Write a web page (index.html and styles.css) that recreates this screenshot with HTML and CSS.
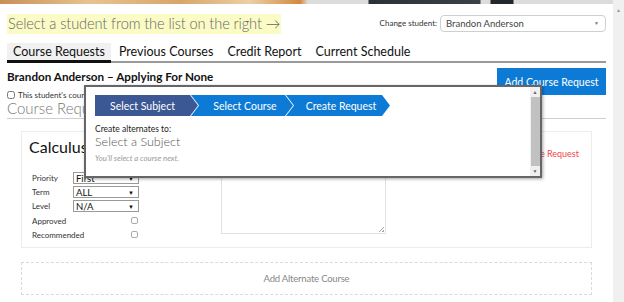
FILE: index.html
```html
<!DOCTYPE html>
<html lang="en">
<head>
    <meta charset="UTF-8">
    <title>Course Requests</title>
    <link rel="stylesheet" href="styles.css">
</head>
<body>
    <div class="page">
        <div class="main">
            <div class="banner"></div>

            <div class="content">
                <div class="student-bar">
                    <h1 class="pick">Select a student from the list on the right &rarr;</h1>
                    <div class="change">
                        <span class="change-label">Change student:</span>
                        <div class="student-select">
                            <span>Brandon Anderson</span>
                            <span class="caret">&#9660;</span>
                        </div>
                    </div>
                </div>

                <ul class="tabs">
                    <li class="tab active">Course Requests</li>
                    <li class="tab">Previous Courses</li>
                    <li class="tab">Credit Report</li>
                    <li class="tab">Current Schedule</li>
                </ul>

                <div class="student-head">
                    <div>
                        <h2 class="student-name">Brandon Anderson &ndash; Applying For None</h2>
                        <label class="lock"><input type="checkbox"> This student's course requests are locked</label>
                    </div>
                    <button class="add-btn">Add Course Request</button>
                </div>

                <h3 class="section-title">Course Requests</h3>

                <div class="card">
                    <div class="card-left">
                        <h4 class="course-name">Calculus I</h4>
                        <div class="fields">
                            <span class="lbl">Priority</span>
                            <div class="mini-select"><span>First</span><span class="arrow">&#9660;</span></div>
                            <span class="lbl">Term</span>
                            <div class="mini-select"><span>ALL</span><span class="arrow">&#9660;</span></div>
                            <span class="lbl">Level</span>
                            <div class="mini-select"><span>N/A</span><span class="arrow">&#9660;</span></div>
                            <span class="lbl">Approved</span>
                            <span class="box"></span>
                            <span class="lbl">Recommended</span>
                            <span class="box"></span>
                        </div>
                    </div>
                    <div class="notes"><span class="grip"></span></div>
                    <a class="remove" href="#">Remove Request</a>
                </div>

                <div class="alternate">Add Alternate Course</div>
            </div>

            <div class="modal">
                <div class="modal-body">
                    <div class="steps">
                        <div class="step done">Select Subject</div>
                        <div class="step">Select Course</div>
                        <div class="step">Create Request</div>
                    </div>
                    <p class="alt-label">Create alternates to:</p>
                    <p class="alt-title">Select a Subject</p>
                    <p class="alt-hint">You'll select a course next.</p>
                </div>
                <div class="modal-scroll">
                    <span class="sc-arrow">&#9650;</span>
                    <span class="sc-thumb"></span>
                    <span class="sc-arrow">&#9660;</span>
                </div>
            </div>
        </div>

        <div class="page-scroll">
            <span class="sc-arrow">&#9650;</span>
        </div>
    </div>
</body>
</html>
```

FILE: styles.css
```css
:root {
    --blue: #0d7bd6;
    --dark-blue: #3b5894;
    --text: #222;
}

* {
    margin: 0;
    padding: 0;
    box-sizing: border-box;
    font-family: Lato, 'Open Sans', sans-serif;
}

body {
    background: #fff;
    color: var(--text);
    width: 624px;
    height: 302px;
    overflow: hidden;
}

.page {
    display: flex;
    height: 302px;
}

.main {
    position: relative;
    width: 613px;
}

.banner {
    height: 4px;
    background: linear-gradient(90deg, #c98f56 0, #e6c391 90px, #d8a569 180px, #eccfa6 250px, #d2883f 300px, #dcdcdc 308px, #dcdcdc 368px, #2b3137 369px, #3a4248 480px, #dcdcdc 481px, #dcdcdc 490px, #22282c 491px, #22282c 513px, #dcdcdc 514px);
}

.content {
    padding: 0 7px;
}

/* student picker */
.student-bar {
    display: flex;
    justify-content: space-between;
    align-items: center;
    margin-top: 8px;
}

.pick {
    background: #fbfbc6;
    color: #666;
    font-size: 14.6px;
    font-weight: 300;
    letter-spacing: -0.1px;
    line-height: 20px;
    padding: 0 1px;
    margin-top: 2px;
}

.change {
    display: flex;
    align-items: center;
    gap: 3px;
}

.change-label {
    font-size: 8px;
    color: #333;
}

.student-select {
    width: 166px;
    height: 17px;
    border: 1px solid #cfcfcf;
    border-radius: 4px;
    display: flex;
    justify-content: space-between;
    align-items: center;
    padding: 0 6px 0 5px;
    font-size: 9.5px;
    color: #444;
}

.caret {
    font-size: 5px;
    color: #777;
}

/* tabs */
.tabs {
    display: flex;
    gap: 2px;
    list-style: none;
    margin-top: 9px;
    border-bottom: 2px solid #9a9a9a;
}

.tab {
    font-size: 12.5px;
    line-height: 18px;
    padding: 0 6px;
    color: #111;
}

.tab.active {
    background: #f1f1f1;
    box-shadow: inset 0 -3px 0 #111;
    margin-bottom: -2px;
    padding-bottom: 2px;
}

/* student header */
.student-head {
    display: flex;
    justify-content: space-between;
    align-items: flex-start;
    height: 31px;
    margin-top: 5px;
}

.student-name {
    font-size: 11.7px;
    font-weight: 700;
    line-height: 15px;
    margin-top: 1px;
    color: #111;
}

.lock {
    display: flex;
    align-items: center;
    gap: 3px;
    font-size: 8px;
    color: #333;
    line-height: 10px;
    margin-top: 6px;
    white-space: nowrap;
}

.lock input {
    width: 8px;
    height: 8px;
    margin: 0;
}

.add-btn {
    width: 109px;
    height: 27px;
    border: none;
    background: var(--blue);
    color: #fff;
    font-size: 10.5px;
}

.section-title {
    font-size: 15px;
    font-weight: 300;
    color: #777;
    line-height: 18px;
    padding-bottom: 1px;
    border-bottom: 1px solid #cfcfcf;
}

/* course card */
.card {
    display: flex;
    align-items: flex-start;
    margin: 12px 14px 0;
    height: 117px;
    border: 1px solid #ececec;
    padding: 5px 12px 0 7px;
}

.card-left {
    width: 192px;
}

.course-name {
    font-size: 16px;
    font-weight: 400;
    color: #111;
    line-height: 20px;
}

.fields {
    display: grid;
    grid-template-columns: 41px 66px;
    grid-auto-rows: 14.2px;
    align-items: center;
    margin: 14px 0 0 3px;
}

.lbl {
    font-size: 8px;
    color: #333;
}

.mini-select {
    height: 12px;
    border: 1px solid #999;
    display: flex;
    justify-content: space-between;
    align-items: center;
    padding: 0 4px 0 2px;
    font-size: 9.5px;
    color: #111;
}

.mini-select .arrow {
    font-size: 6px;
}

.box {
    justify-self: end;
    width: 7px;
    height: 7px;
    border: 1px solid #aaa;
    border-radius: 2px;
    margin-right: 1px;
}

.notes {
    position: relative;
    width: 165px;
    height: 97px;
    border: 1px solid #e2e2e2;
}

.grip {
    position: absolute;
    right: 1px;
    bottom: 1px;
    width: 5px;
    height: 5px;
    background: linear-gradient(135deg, transparent 45%, #aaa 45%, #aaa 55%, transparent 55%, transparent 75%, #aaa 75%);
}

.remove {
    margin-left: auto;
    margin-top: 11px;
    color: #f04848;
    font-size: 9px;
    text-decoration: none;
}

.alternate {
    margin: 14px 14px 0;
    height: 33px;
    border: 1px dashed #dadada;
    display: flex;
    align-items: center;
    justify-content: center;
    font-size: 9.5px;
    color: #888;
    letter-spacing: -0.2px;
}

/* modal overlaying the page */
.modal {
    position: absolute;
    left: 84px;
    top: 85px;
    width: 458px;
    height: 93px;
    background: #fff;
    border: 2px solid #666;
    box-shadow: 1px 1px 3px rgba(0, 0, 0, 0.35);
    display: flex;
}

.modal-body {
    flex: 1;
    padding: 8px 9px;
}

.steps {
    display: flex;
    height: 21px;
}

.step {
    background: var(--blue);
    color: #fff;
    font-size: 10.5px;
    display: flex;
    align-items: center;
    justify-content: center;
    width: 102px;
    margin-left: -7px;
    padding-left: 6px;
    clip-path: polygon(0 0, calc(100% - 8px) 0, 100% 50%, calc(100% - 8px) 100%, 0 100%, 8px 50%);
}

.step.done {
    background: var(--dark-blue);
    margin-left: 0;
    width: 103px;
    padding-left: 0;
    padding-right: 8px;
    clip-path: polygon(0 0, calc(100% - 8px) 0, 100% 50%, calc(100% - 8px) 100%, 0 100%);
}

.step:last-child {
    width: 104px;
}

.alt-label {
    font-size: 8.5px;
    color: #222;
    margin-top: 8px;
    line-height: 10px;
}

.alt-title {
    font-size: 12.5px;
    font-weight: 300;
    color: #555;
    line-height: 16px;
}

.alt-hint {
    font-size: 7.8px;
    font-style: italic;
    color: #999;
    margin-top: 3px;
}

.modal-scroll {
    width: 10px;
    background: #f0f0f0;
    display: flex;
    flex-direction: column;
    align-items: center;
}

.sc-arrow {
    font-size: 5px;
    color: #666;
    line-height: 10px;
}

.sc-thumb {
    flex: 1;
    width: 9px;
    background: #c1c1c1;
}

.page-scroll {
    width: 11px;
    background: #f0f0f0;
    display: flex;
    flex-direction: column;
    align-items: center;
    padding-top: 5px;
}

.page-scroll .sc-arrow {
    color: #999;
}
```
